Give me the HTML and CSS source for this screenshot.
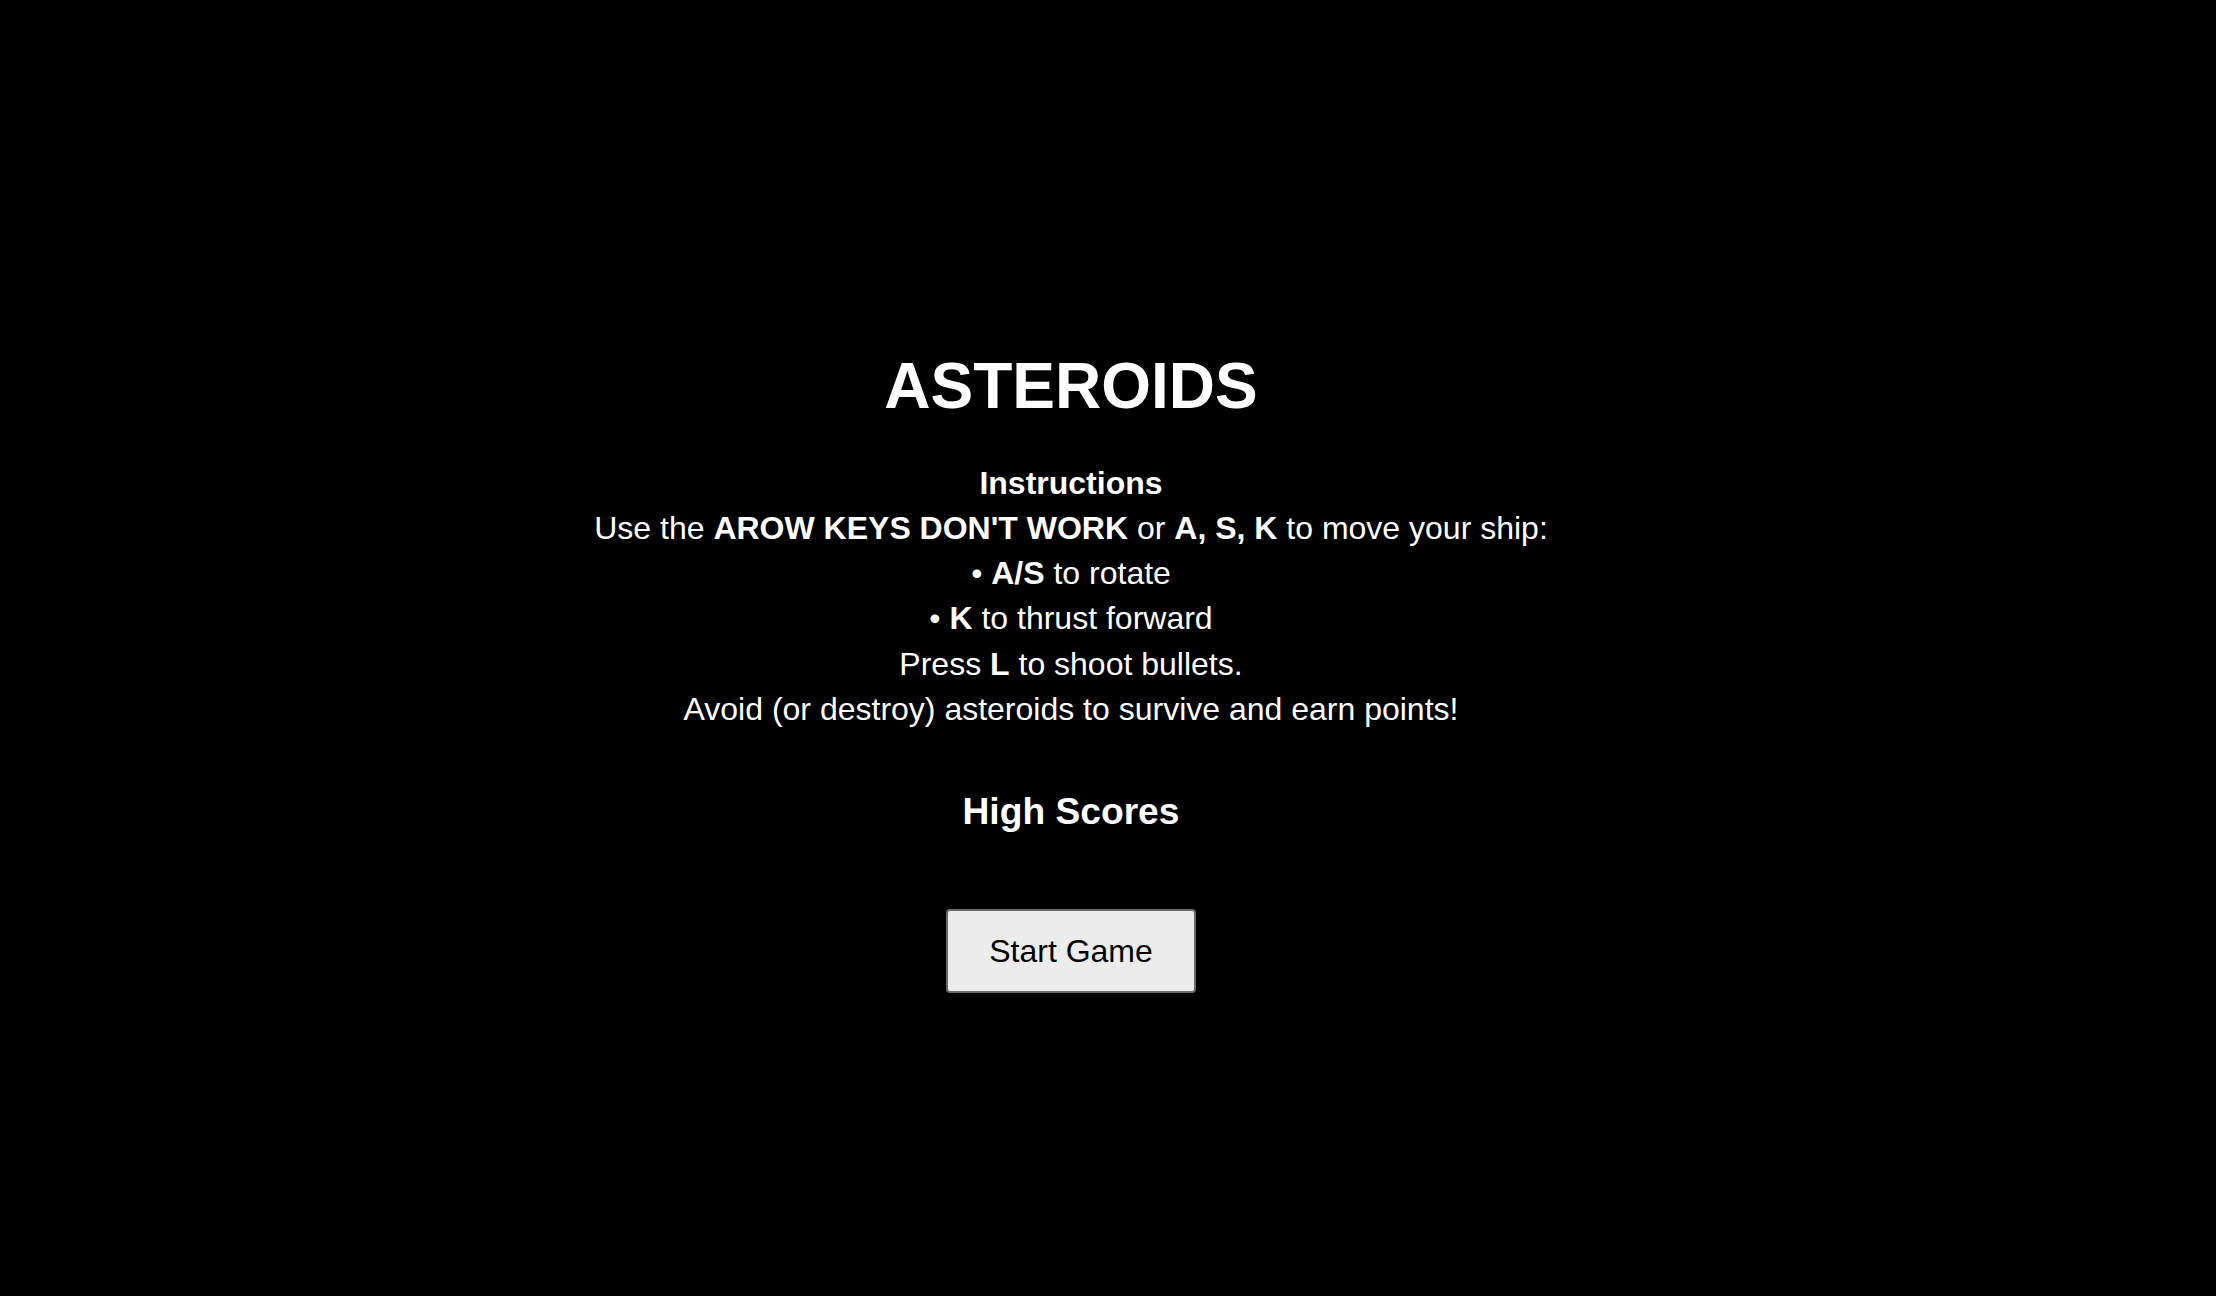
FILE: index.html
```html
<!DOCTYPE html>
<html lang="en">
<head>
<meta charset="utf-8">
<title>Asteroids</title>
<link rel="stylesheet" href="styles.css">
</head>
<body>
<main class="screen">
  <h1 class="title">ASTEROIDS</h1>
  <div class="instructions">
    <div class="instructions-head">Instructions</div>
    <div class="line">Use the <strong>AROW KEYS DON'T WORK</strong> or <strong>A, S, K</strong> to move your ship:</div>
    <div class="line">• <strong>A/S</strong> to rotate</div>
    <div class="line">• <strong>K</strong> to thrust forward</div>
    <div class="line">Press <strong>L</strong> to shoot bullets.</div>
    <div class="line">Avoid (or destroy) asteroids to survive and earn points!</div>
  </div>
  <h2 class="scores-title">High Scores</h2>
  <ul class="scores"></ul>
  <button class="start" type="button">Start Game</button>
</main>
</body>
</html>
```
FILE: styles.css
```css
html, body {
  margin: 0;
  padding: 0;
  background: #000;
}
body {
  color: #fff;
  font-family: "Liberation Sans", Arial, Helvetica, sans-serif;
}
.screen {
  display: flex;
  flex-direction: column;
  align-items: center;
  padding: 348.5px 74px 0 0;
  text-align: center;
}
.title {
  margin: 0;
  font-size: 64px;
  line-height: 74px;
  font-weight: 700;
}
.instructions {
  margin-top: 38px;
  font-size: 32px;
  line-height: 45.3px;
}
.instructions-head {
  font-weight: 700;
}
.instructions strong {
  font-weight: 700;
}
.scores-title {
  margin: 58px 0 0;
  font-size: 37.2px;
  line-height: 42px;
  font-weight: 700;
}
.scores {
  margin: 0;
  padding: 0;
  list-style: none;
}
.start {
  margin-top: 76.6px;
  padding: 21px 41px;
  font-family: "Liberation Sans", Arial, Helvetica, sans-serif;
  font-size: 32px;
  line-height: 38px;
  color: #000;
  background: #ececec;
  border: 2px solid #6a6a6a;
  border-radius: 4px;
}
```
